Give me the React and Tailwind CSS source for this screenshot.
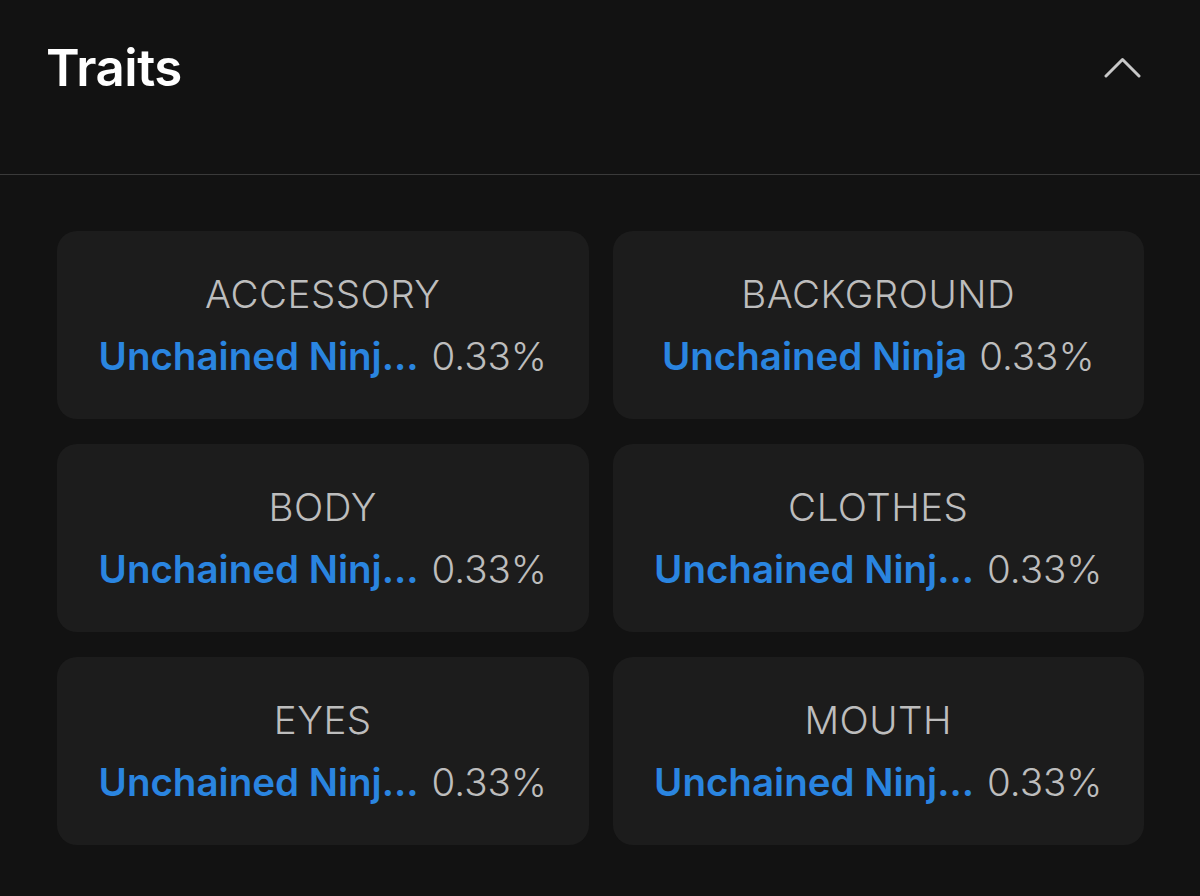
import React from "react";

const traits = [
    { type: "ACCESSORY", value: "Unchained Ninja Star", pct: "0.33%" },
    { type: "BACKGROUND", value: "Unchained Ninja", pct: "0.33%" },
    { type: "BODY", value: "Unchained Ninja Skin", pct: "0.33%" },
    { type: "CLOTHES", value: "Unchained Ninja Robe", pct: "0.33%" },
    { type: "EYES", value: "Unchained Ninja Eyes", pct: "0.33%" },
    { type: "MOUTH", value: "Unchained Ninja Mask", pct: "0.33%" },
];

const App = () => {
    return (
        <div className="w-[1200px] h-[896px] bg-[#121212] overflow-hidden" style={{ fontFamily: "Inter, 'Noto Sans', sans-serif" }}>
            {/* header */}
            <div className="h-[175px] flex items-start justify-between pl-[46px] pr-[59px] pt-[33px] border-b border-[#3a3a3a]">
                <h2 className="text-[51px] leading-[70px] font-semibold text-white tracking-[-0.5px]">Traits</h2>
                <svg width="37" height="21" viewBox="0 0 37 21" className="mt-[24px]" fill="none">
                    <path d="M2 19 L18.5 2.5 L35 19" stroke="#c8c8c8" strokeWidth="3" strokeLinecap="round" strokeLinejoin="round" />
                </svg>
            </div>

            {/* grid of traits */}
            <div className="grid grid-cols-2 gap-x-[24px] gap-y-[25px] pl-[57px] pr-[56px] pt-[56px]">
                {traits.map((t) => (
                    <div key={t.type} className="h-[188px] bg-[#1c1c1c] rounded-[20px] flex flex-col items-center justify-center">
                        <p className="text-[38.5px] leading-[48px] font-light text-[#bdbdbd] tracking-[0.5px]">{t.type}</p>
                        <div className="flex items-baseline mt-[13px] text-[38.5px] leading-[50px]">
                            <span className="max-w-[321px] truncate font-semibold text-[#2a85e0]">{t.value}</span>
                            <span className="ml-[12px] font-light text-[#bdbdbd]">{t.pct}</span>
                        </div>
                    </div>
                ))}
            </div>
        </div>
    );
};

export default App;
